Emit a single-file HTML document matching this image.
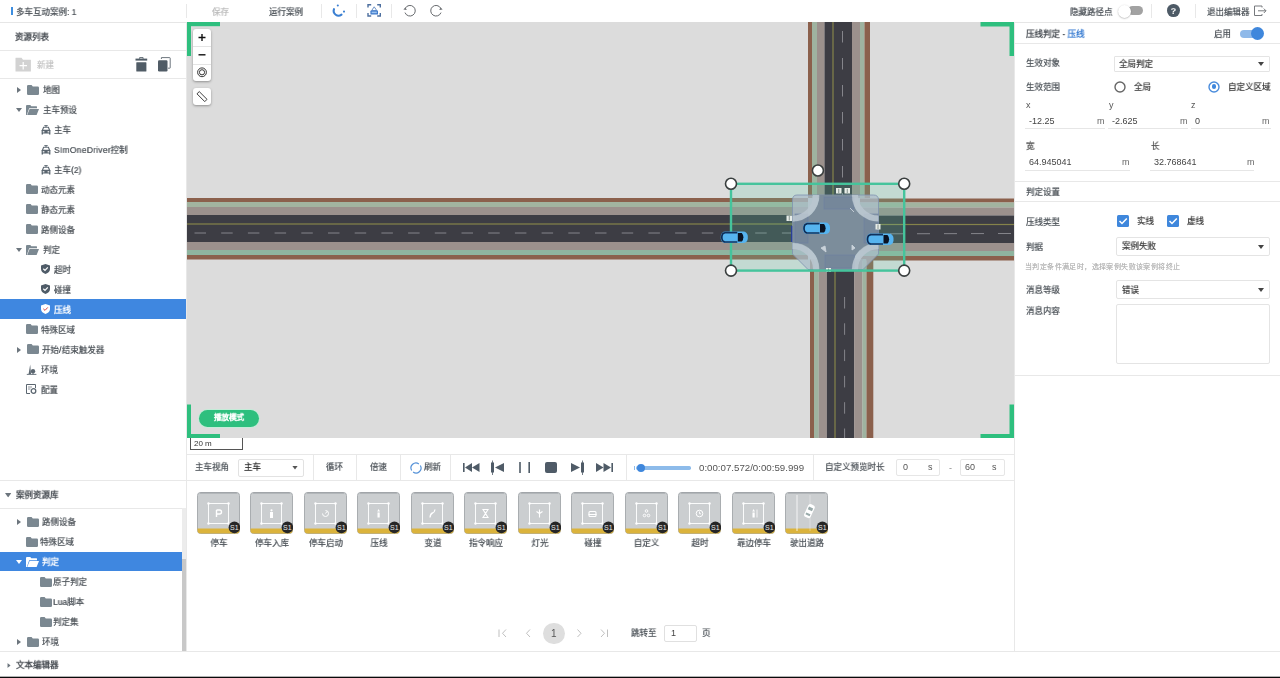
<!DOCTYPE html>
<html lang="zh-CN">
<head>
<meta charset="utf-8">
<style>
*{margin:0;padding:0;box-sizing:border-box}
html,body{width:1280px;height:678px;overflow:hidden;background:#fff}
body{font-family:"Liberation Sans",sans-serif;font-size:9px;color:#52585e;position:relative}
.a{position:absolute}
.t{position:absolute;white-space:nowrap;line-height:13px;height:13px;transform:scale(0.944);transform-origin:0 50%;text-shadow:0 0 .5px;will-change:transform}
.c{transform-origin:50% 50%}
.l{transform:none;text-shadow:none}
.hl{position:absolute;height:1px;background:#e8e8e8}
.vl{position:absolute;width:1px;background:#e8e8e8}
svg.i{position:absolute;overflow:visible}
</style>
</head>
<body>
<svg width="0" height="0" style="position:absolute">
  <defs>
    <symbol id="folder" viewBox="0 0 12 10"><path d="M0 1.2Q0 0 1.2 0H4.6L5.8 1.6H10.8Q12 1.6 12 2.8V8.8Q12 10 10.8 10H1.2Q0 10 0 8.8Z" fill="#7b8891"/></symbol>
    <symbol id="open" viewBox="0 0 13 10"><path d="M0 1Q0 0 1 0H4.3L5.3 1.3H10.5Q11 1.3 11 2V3.3H3.2L0.8 10H0Z" fill="#7b8891"/><path d="M3.6 4H13L10.6 10H1.2Z" fill="#7b8891"/></symbol>
    <symbol id="car" viewBox="0 0 10 10"><path d="M3.2 0.3H6.8M5 0.3V1.8M2.6 2.2H7.4L8.6 5.2H1.4Z" stroke="#5b6670" stroke-width="1.1" fill="none"/><path d="M0.6 5H9.4V9.6H8V8.6H2V9.6H0.6Z" fill="#5b6670"/><rect x="1.8" y="6.2" width="1.6" height="1.2" fill="#fff"/><rect x="6.6" y="6.2" width="1.6" height="1.2" fill="#fff"/></symbol>
    <symbol id="shield" viewBox="0 0 9 10"><path d="M4.5 0L9 1.4V5Q9 8.4 4.5 10Q0 8.4 0 5V1.4Z" fill="#4f5c68"/><path d="M2.3 4.8L4 6.4L6.8 3.4" stroke="#fff" stroke-width="1.2" fill="none"/></symbol>
    <symbol id="tri-r" viewBox="0 0 4 6"><path d="M0 0L4 3L0 6Z" fill="#6c757d"/></symbol>
    <symbol id="tri-d" viewBox="0 0 6 4"><path d="M0 0H6L3 4Z" fill="#6c757d"/></symbol>
  </defs>
</svg>

<!-- ============ TOP BAR ============ -->
<div class="a" style="left:0;top:0;width:1280px;height:23px;background:#fff;border-bottom:1px solid #e6e6e6"></div>
<div class="a" style="left:11px;top:7px;width:2px;height:8px;background:#3d8ee0"></div>
<div class="t" style="left:16px;top:5.5px;color:#50565c">多车互动案例: 1</div>
<div class="vl" style="left:186px;top:4px;height:14px"></div>
<div class="t" style="left:212px;top:5.5px;color:#bcbcbc">保存</div>
<div class="t" style="left:269px;top:5.5px;color:#50565c">运行案例</div>
<div class="vl" style="left:321px;top:4px;height:14px"></div>
<div class="vl" style="left:356px;top:4px;height:14px"></div>
<div class="vl" style="left:391px;top:4px;height:14px"></div>
<div class="t" style="left:1070px;top:5.5px;color:#50565c">隐藏路径点</div>
<div class="vl" style="left:1151px;top:4px;height:14px"></div>
<div class="vl" style="left:1194.5px;top:4px;height:14px"></div>
<div class="t" style="left:1207px;top:5.5px;color:#50565c">退出编辑器</div>

<!-- ============ LEFT PANEL ============ -->
<div class="vl" style="left:186px;top:22px;height:630px"></div>
<div class="t" style="left:15px;top:31px;font-weight:bold;color:#4a4f55;text-shadow:none">资源列表</div>
<div class="hl" style="left:0;top:50px;width:186px"></div>
<div class="t" style="left:37px;top:59px;color:#c4c4c4">新建</div>
<div class="hl" style="left:0;top:78px;width:186px"></div>

<!-- tree -->
<svg class="i" style="left:17px;top:87px" width="4" height="6"><use href="#tri-r"/></svg>
<svg class="i" style="left:27px;top:85px" width="12" height="10"><use href="#folder"/></svg>
<div class="t" style="left:42.5px;top:84px">地图</div>

<svg class="i" style="left:16px;top:108px" width="6" height="4"><use href="#tri-d"/></svg>
<svg class="i" style="left:26px;top:105px" width="13" height="10"><use href="#open"/></svg>
<div class="t" style="left:42.5px;top:104px">主车预设</div>

<svg class="i" style="left:40.5px;top:125px" width="10" height="10"><use href="#car"/></svg>
<div class="t" style="left:53.5px;top:124px">主车</div>
<svg class="i" style="left:40.5px;top:145px" width="10" height="10"><use href="#car"/></svg>
<div class="t" style="left:53.5px;top:144px"><span style="letter-spacing:.28px">SImOneDriver</span>控制</div>
<svg class="i" style="left:40.5px;top:165px" width="10" height="10"><use href="#car"/></svg>
<div class="t" style="left:53.5px;top:164px">主车(2)</div>

<svg class="i" style="left:26px;top:184px" width="12" height="10"><use href="#folder"/></svg>
<div class="t" style="left:41px;top:184px">动态元素</div>
<svg class="i" style="left:26px;top:204px" width="12" height="10"><use href="#folder"/></svg>
<div class="t" style="left:41px;top:204px">静态元素</div>
<svg class="i" style="left:26px;top:224px" width="12" height="10"><use href="#folder"/></svg>
<div class="t" style="left:41px;top:224px">路侧设备</div>

<svg class="i" style="left:16px;top:248px" width="6" height="4"><use href="#tri-d"/></svg>
<svg class="i" style="left:26px;top:245px" width="13" height="10"><use href="#open"/></svg>
<div class="t" style="left:42.5px;top:244px">判定</div>

<svg class="i" style="left:41px;top:264px" width="9" height="10"><use href="#shield"/></svg>
<div class="t" style="left:53.5px;top:264px">超时</div>
<svg class="i" style="left:41px;top:284px" width="9" height="10"><use href="#shield"/></svg>
<div class="t" style="left:53.5px;top:284px">碰撞</div>

<div class="a" style="left:0;top:299px;width:186px;height:20px;background:#3f87e0"></div>
<svg class="i" style="left:41px;top:304px" width="9" height="10" viewBox="0 0 9 10"><path d="M4.5 0L9 1.4V5Q9 8.4 4.5 10Q0 8.4 0 5V1.4Z" fill="#fff"/><path d="M2.3 4.8L4 6.4L6.8 3.4" stroke="#d64545" stroke-width="1" fill="none"/></svg>
<div class="t" style="left:53.5px;top:304px;color:#fff;font-weight:bold;text-shadow:none">压线</div>

<svg class="i" style="left:26px;top:324px" width="12" height="10"><use href="#folder"/></svg>
<div class="t" style="left:41px;top:324px">特殊区域</div>

<svg class="i" style="left:17px;top:347px" width="4" height="6"><use href="#tri-r"/></svg>
<svg class="i" style="left:27px;top:344px" width="12" height="10"><use href="#folder"/></svg>
<div class="t" style="left:42px;top:344px">开始/结束触发器</div>

<svg class="i" style="left:26px;top:364px" width="11" height="11" viewBox="0 0 11 11"><path d="M4.2 0.5L2.6 10H5Z" fill="#5b6670"/><circle cx="7" cy="7.2" r="2.2" fill="#5b6670"/><path d="M7 9V10.4M0.8 10.4H10.4" stroke="#5b6670" stroke-width="0.9"/></svg>
<div class="t" style="left:40.5px;top:364px">环境</div>
<svg class="i" style="left:26px;top:384px" width="11" height="10" viewBox="0 0 11 10"><path d="M9.5 4V0.5H0.5V9.5H4" stroke="#5b6670" stroke-width="1" fill="none"/><path d="M2 3H6M2 5H4.5" stroke="#5b6670" stroke-width="0.7"/><circle cx="7.5" cy="7" r="2.3" fill="none" stroke="#5b6670" stroke-width="1.3"/></svg>
<div class="t" style="left:40.5px;top:384px">配置</div>

<!-- case library -->
<div class="hl" style="left:0;top:480px;width:186px"></div>
<svg class="i" style="left:5.3px;top:493px" width="6.3" height="4.4" viewBox="0 0 6 4" preserveAspectRatio="none"><use href="#tri-d"/></svg>
<div class="t" style="left:15.5px;top:489px;font-weight:bold;color:#4a4f55;text-shadow:none">案例资源库</div>
<div class="hl" style="left:0;top:508px;width:186px"></div>

<svg class="i" style="left:17px;top:519px" width="4" height="6"><use href="#tri-r"/></svg>
<svg class="i" style="left:27px;top:517px" width="12" height="10"><use href="#folder"/></svg>
<div class="t" style="left:41.5px;top:516px">路侧设备</div>
<svg class="i" style="left:26px;top:537px" width="12" height="10"><use href="#folder"/></svg>
<div class="t" style="left:40px;top:536px">特殊区域</div>

<div class="a" style="left:0;top:552px;width:182px;height:19px;background:#3f87e0"></div>
<svg class="i" style="left:16px;top:560px" width="6" height="4" viewBox="0 0 6 4"><path d="M0 0H6L3 4Z" fill="#fff"/></svg>
<svg class="i" style="left:26px;top:557px" width="13" height="10" viewBox="0 0 13 10"><path d="M0 1Q0 0 1 0H4.3L5.3 1.3H10.5Q11 1.3 11 2V3.3H3.2L0.8 10H0Z" fill="#fff"/><path d="M3.6 4H13L10.6 10H1.2Z" fill="#fff"/></svg>
<div class="t" style="left:42px;top:556px;color:#fff;font-weight:bold;text-shadow:none">判定</div>

<svg class="i" style="left:40px;top:577px" width="12" height="10"><use href="#folder"/></svg>
<div class="t" style="left:53px;top:576px">原子判定</div>
<svg class="i" style="left:40px;top:597px" width="12" height="10"><use href="#folder"/></svg>
<div class="t" style="left:53px;top:596px">Lua脚本</div>
<svg class="i" style="left:40px;top:617px" width="12" height="10"><use href="#folder"/></svg>
<div class="t" style="left:53px;top:616px">判定集</div>

<svg class="i" style="left:17px;top:639px" width="4" height="6"><use href="#tri-r"/></svg>
<svg class="i" style="left:27px;top:637px" width="12" height="10"><use href="#folder"/></svg>
<div class="t" style="left:41.5px;top:636px">环境</div>

<div class="a" style="left:182px;top:508px;width:4px;height:143px;background:#ececec"></div>
<div class="a" style="left:182px;top:559px;width:4px;height:92px;background:#c8c8c8"></div>

<div class="hl" style="left:0;top:651px;width:1280px"></div>
<svg class="i" style="left:7px;top:663px" width="4" height="5" viewBox="0 0 4 6"><use href="#tri-r"/></svg>
<div class="t" style="left:15.5px;top:659px;font-weight:bold;color:#4a4f55;text-shadow:none">文本编辑器</div>
<div class="a" style="left:0;top:676px;width:1280px;height:1px;background:rgba(0,0,0,0.3)"></div><div class="a" style="left:0;top:677px;width:1280px;height:1px;background:#0a0a0a"></div>

<!-- ============ MAP ============ -->
<svg class="a" style="left:186px;top:22px" width="828" height="416" viewBox="186 22 828 416">
  <defs>
    <g id="carL">
      <rect x="0" y="0" width="27" height="11.5" rx="4.5" ry="4.5" fill="#56b4ef"/>
      <path d="M4 1.2Q1 1.5 1 5.75Q1 10 4 10.3" stroke="#0e2c55" stroke-width="1.7" fill="none"/>
      <path d="M3.5 1.1H16.5M3.5 10.4H16.5" stroke="#10325e" stroke-width="1.7"/>
      <path d="M17 1.5H21Q22.6 3.2 22.6 5.75Q22.6 8.3 21 10H17Z" fill="#0a1322"/>
    </g>
  </defs>
  <rect x="187" y="22" width="827" height="416" fill="#dcdcdc"/>
  <!-- horizontal road -->
  <g transform="translate(0,0)">
    <rect x="187" y="198" width="621" height="4" fill="#8b604c"/>
    <rect x="187" y="202" width="621" height="5" fill="#a2b4a0"/>
    <rect x="187" y="207" width="621" height="8" fill="#9c918d"/>
    <rect x="187" y="215" width="621" height="27" fill="#3d3d44"/>
    <rect x="187" y="223.4" width="621" height="1.2" fill="#85834a"/>
    <line x1="194.5" y1="233" x2="808" y2="233" stroke="#85858b" stroke-width="1" stroke-dasharray="11.5 15.2"/>
    <rect x="187" y="242" width="621" height="8" fill="#9c918d"/>
    <rect x="187" y="250" width="621" height="5" fill="#8fb49f"/>
    <rect x="187" y="255" width="621" height="4.5" fill="#8b604c"/>
  </g>
  <g transform="translate(0,0.5)">
    <rect x="860" y="198" width="154" height="4" fill="#8b604c"/>
    <rect x="860" y="202" width="154" height="5" fill="#a2b4a0"/>
    <rect x="860" y="207" width="154" height="8" fill="#9c918d"/>
    <rect x="860" y="215" width="154" height="27.5" fill="#3d3d44"/>
    <rect x="860" y="223.4" width="154" height="1.2" fill="#85834a"/>
    <line x1="890" y1="233.3" x2="1014" y2="233" stroke="#85858b" stroke-width="1" stroke-dasharray="13 14"/>
    <rect x="860" y="242.5" width="154" height="8" fill="#9c918d"/>
    <rect x="860" y="250.5" width="154" height="5" fill="#8fb49f"/>
    <rect x="860" y="255.5" width="154" height="4.5" fill="#8b604c"/>
  </g>
  <!-- vertical road top -->
  <g>
    <rect x="808" y="22" width="4" height="176" fill="#8b604c"/>
    <rect x="812" y="22" width="5" height="176" fill="#9fb3a0"/>
    <rect x="817" y="22" width="7.5" height="176" fill="#9c918d"/>
    <rect x="824.5" y="22" width="27.5" height="176" fill="#3d3d44"/>
    <rect x="832.4" y="22" width="1.2" height="176" fill="#85834a"/>
    <line x1="842.5" y1="31" x2="842.5" y2="198" stroke="#85858b" stroke-width="1" stroke-dasharray="11.5 15.5"/>
    <rect x="852" y="22" width="8" height="176" fill="#9c918d"/>
    <rect x="860" y="22" width="4.5" height="176" fill="#9fb3a0"/>
    <rect x="864.5" y="22" width="5.5" height="176" fill="#8b604c"/>
  </g>
  <!-- vertical road bottom -->
  <g>
    <rect x="810" y="259" width="4" height="179" fill="#8b604c"/>
    <rect x="814" y="259" width="4.7" height="179" fill="#9fb3a0"/>
    <rect x="818.7" y="259" width="8.2" height="179" fill="#9c918d"/>
    <rect x="826.9" y="259" width="27.3" height="179" fill="#3d3d44"/>
    <rect x="834.4" y="259" width="1.2" height="179" fill="#85834a"/>
    <line x1="844.6" y1="297" x2="844.6" y2="438" stroke="#85858b" stroke-width="1" stroke-dasharray="11.5 14.8"/>
    <rect x="854.2" y="259" width="8.2" height="179" fill="#9c918d"/>
    <rect x="862.4" y="259" width="4.1" height="179" fill="#9fb3a0"/>
    <rect x="866.5" y="259" width="6.8" height="179" fill="#8b604c"/>
  </g>
  <!-- selection fill -->
  <rect x="731" y="183.8" width="173.2" height="86.8" fill="#5ed0a8" fill-opacity="0.2"/>
  <!-- junction -->
  <path d="M797 195H873.5Q878.5 195 878.5 200V254L863 269.5H808L792.5 254V200Q792.5 195 797 195Z" fill="#aebccb" fill-opacity="0.72" stroke="#7f93b0" stroke-width="0.8"/>
  <path d="M819.5 195H851.5A27 27 0 0 0 878.5 222V242.5A27 27 0 0 0 851.5 269.5H819.5A27 27 0 0 0 792.5 242.5V222A27 27 0 0 0 819.5 195Z" fill="#7c8d9b"/>
  <g fill="#72849a" fill-opacity="0.6" stroke="#6b80a3" stroke-width="0.7" stroke-opacity="0.8">
  <rect x="824" y="197" width="30" height="12"/><rect x="825" y="255" width="29.5" height="13"/>
  <rect x="795" y="214" width="13" height="29"/><rect x="864" y="214" width="14" height="29"/></g>
  <path d="M816 195A23.5 23.5 0 0 1 792.5 218.5M855 195A23.5 23.5 0 0 0 878.5 218.5M855 269.5A23.5 23.5 0 0 1 878.5 246M816 269.5A23.5 23.5 0 0 0 792.5 246" stroke="#b9c5cf" stroke-width="6" fill="none" stroke-opacity="0.9"/>
  
  
  
  
  <path d="M821 248L826 252L825 246Z M852 245L855 248L852 250Z M850 208L854 212" stroke="#c9d2da" stroke-width="0.9" fill="#c9d2da"/>
  <rect x="791" y="226" width="1.3" height="16" fill="#2a3f99"/>
  <!-- stop marks -->
  <g fill="#e8ede8">
    <rect x="836" y="188" width="5.5" height="5.5"/><rect x="844.5" y="188" width="5.5" height="5.5"/>
    <rect x="786.5" y="215.5" width="5.5" height="5.5"/>
    <rect x="875.5" y="224" width="5" height="5.5"/>
    <rect x="826" y="268" width="5" height="4"/>
  </g>
  <g stroke="#5a6b66" stroke-width="0.7"><path d="M838.75 188.8V193M847.25 188.8V193M789.25 216V220.5M878 224.5V229M828.5 268.5V272"/></g>
  <!-- cars -->
  
  <!-- selection -->
  <rect x="731" y="183.8" width="173.2" height="86.8" fill="none" stroke="#45c49c" stroke-width="2.4"/>
  <g fill="#fff" stroke="#3a3f3f" stroke-width="1.6">
    <circle cx="731" cy="183.8" r="5.5"/>
    <circle cx="904.2" cy="183.8" r="5.5"/>
    <circle cx="731" cy="270.6" r="5.5"/>
    <circle cx="904.2" cy="270.6" r="5.5"/>
    <circle cx="817.9" cy="170.5" r="5.5"/>
  </g>
  <use href="#carL" x="720.8" y="231.6"/>
  <use href="#carL" x="803" y="222.6"/>
  <use href="#carL" x="866.5" y="233.6"/>
  <!-- corner brackets -->
  <g fill="#2ebf7e">
    <rect x="187" y="22" width="33" height="4.2"/><rect x="187" y="22" width="4" height="34"/>
    <rect x="980.5" y="22" width="33.5" height="4.5"/><rect x="1009.5" y="22" width="4.5" height="34"/>
    <rect x="187" y="434" width="33" height="4.3"/><rect x="187" y="404.5" width="4" height="34"/>
    <rect x="980.5" y="434" width="33.5" height="4.5"/><rect x="1009.5" y="404.5" width="4.5" height="34"/>
  </g>
</svg>


<!-- ============ BOTTOM PANEL ============ -->
<!-- scale bar -->
<div class="a" style="left:190px;top:438px;width:53px;height:12px;border:1px solid #555;border-top:none;background:#fff"></div>
<div class="t l" style="left:194px;top:438px;font-size:8px;line-height:11px;color:#333">20 m</div>
<!-- play mode pill -->
<div class="a" style="left:198.5px;top:409.5px;width:60.5px;height:17px;border-radius:9px;background:#2ebf7e;box-shadow:0 0 0 1px rgba(190,240,215,0.8)"></div>
<div class="t c" style="left:198.5px;top:412px;width:60.5px;text-align:center;color:#fff;font-weight:900;font-size:8px;line-height:12px;text-shadow:0 0 .4px #fff">播放模式</div>

<!-- control bar -->
<div class="hl" style="left:186px;top:454px;width:828px"></div>
<div class="hl" style="left:186px;top:480px;width:828px"></div>
<div class="t" style="left:195px;top:461px">主车视角</div>
<div class="a" style="left:238px;top:458.5px;width:66px;height:18px;border:1px solid #e2e2e2;border-radius:2px"></div>
<div class="t" style="left:244px;top:461px;color:#333">主车</div>
<svg class="i" style="left:292px;top:466px" width="6" height="3.5" viewBox="0 0 6 4"><path d="M0 0H6L3 4Z" fill="#555"/></svg>
<div class="vl" style="left:312.5px;top:454px;height:26px"></div>
<div class="t" style="left:325.5px;top:461px">循环</div>
<div class="vl" style="left:356px;top:454px;height:26px"></div>
<div class="t" style="left:369.5px;top:461px">倍速</div>
<div class="vl" style="left:400px;top:454px;height:26px"></div>
<svg class="i" style="left:409.5px;top:461.5px" width="12" height="12" viewBox="0 0 12 12"><path d="M10.33 3.50A5 5 0 0 1 3.13 10.10M1.67 8.50A5 5 0 0 1 8.87 1.90" stroke="#5592d8" stroke-width="1.2" fill="none"/></svg>
<div class="t" style="left:423.5px;top:461px">刷新</div>
<div class="vl" style="left:449.5px;top:454px;height:26px"></div>
<!-- transport icons -->
<svg class="i" style="left:463px;top:460px" width="150" height="16" viewBox="463 460 150 16">
  <g fill="#4f5b67">
    <rect x="463" y="463" width="1.6" height="9"/>
    <path d="M465 467.5L472 463V472Z"/><path d="M472 467.5L479.5 463V472Z"/>
    <rect x="491" y="462.5" width="3" height="10"/><rect x="492.1" y="460.5" width="0.8" height="14.5"/><path d="M495 467.5L504 463V472Z"/>
    <rect x="519.2" y="462" width="1.6" height="11"/><rect x="528.4" y="462" width="1.6" height="11"/>
    <rect x="545" y="462" width="12" height="11" rx="2"/>
    <path d="M571 463L580 467.5L571 472Z"/><rect x="581" y="462.5" width="3" height="10"/><rect x="582.1" y="460.5" width="0.8" height="14.5"/>
    <path d="M596 463L603.5 467.5L596 472Z"/><path d="M603.5 463L611 467.5L603.5 472Z"/><rect x="611.4" y="463" width="1.6" height="9"/>
  </g>
</svg>
<div class="vl" style="left:626px;top:454px;height:26px"></div>
<div class="a" style="left:636px;top:466.2px;width:54.5px;height:3.4px;border-radius:1.7px;background:#8dbbea"></div><div class="a" style="left:634px;top:465.5px;width:1px;height:4.5px;background:#8dbbea"></div>
<div class="a" style="left:637.3px;top:464px;width:8px;height:8px;border-radius:50%;background:#3f87dc"></div>
<div class="t l" style="left:699px;top:461px;font-size:9.7px;color:#555">0:00:07.572/0:00:59.999</div>
<div class="vl" style="left:812.5px;top:454px;height:26px"></div>
<div class="t" style="left:825px;top:461px">自定义预览时长</div>
<div class="a" style="left:896px;top:458.5px;width:44px;height:17.5px;border:1px solid #e6e6e6;border-radius:2px"></div>
<div class="t l" style="left:903px;top:461px;color:#555">0</div>
<div class="t l" style="left:928px;top:461px;color:#555">s</div>
<div class="t l" style="left:949px;top:462px;color:#888">-</div>
<div class="a" style="left:960px;top:458.5px;width:45px;height:17.5px;border:1px solid #e6e6e6;border-radius:2px"></div>
<div class="t l" style="left:965px;top:461px;color:#555">60</div>
<div class="t l" style="left:992px;top:461px;color:#555">s</div>

<div class="a card" style="left:197.0px;top:492px"><svg class="a" style="left:0;top:0" width="43" height="42" viewBox="0 0 43 42"><rect x="0.5" y="0.5" width="42" height="41" rx="3" fill="#cbced0" stroke="#a9adb0"/><path d="M3 1H40" stroke="#9a9ea1" stroke-width="1.2"/><path d="M0.5 36.5H42.5V38.5Q42.5 41.5 39.5 41.5H3.5Q0.5 41.5 0.5 38.5Z" fill="#dbb33c"/><g transform="translate(11.5,11.5)"><rect x="0" y="0" width="20" height="20" fill="none" stroke="#fff" stroke-width="0.9"/><g fill="#fff"><circle cx="0" cy="0" r="1.2"/><circle cx="20" cy="0" r="1.2"/><circle cx="0" cy="20" r="1.2"/><circle cx="20" cy="20" r="1.2"/></g><path d="M8 6.5V13.5M8 6.5H11Q13 6.5 13 8.5Q13 10.5 11 10.5H8" stroke="#fff" stroke-width="1.4" fill="none"/></g><circle cx="37.4" cy="35.4" r="5.8" fill="#262626"/><text x="37.4" y="38" font-size="7" font-family="Liberation Sans" fill="#e6e6e6" text-anchor="middle">S1</text></svg><div class="t c" style="left:-10px;width:63px;text-align:center;top:45px">停车</div></div>
<div class="a card" style="left:250.4px;top:492px"><svg class="a" style="left:0;top:0" width="43" height="42" viewBox="0 0 43 42"><rect x="0.5" y="0.5" width="42" height="41" rx="3" fill="#cbced0" stroke="#a9adb0"/><path d="M3 1H40" stroke="#9a9ea1" stroke-width="1.2"/><path d="M0.5 36.5H42.5V38.5Q42.5 41.5 39.5 41.5H3.5Q0.5 41.5 0.5 38.5Z" fill="#dbb33c"/><g transform="translate(11.5,11.5)"><rect x="0" y="0" width="20" height="20" fill="none" stroke="#fff" stroke-width="0.9"/><g fill="#fff"><circle cx="0" cy="0" r="1.2"/><circle cx="20" cy="0" r="1.2"/><circle cx="0" cy="20" r="1.2"/><circle cx="20" cy="20" r="1.2"/></g><rect x="8.5" y="8.5" width="3" height="6" fill="#fff"/><circle cx="10" cy="6.8" r="1.1" fill="#fff"/></g><circle cx="37.4" cy="35.4" r="5.8" fill="#262626"/><text x="37.4" y="38" font-size="7" font-family="Liberation Sans" fill="#e6e6e6" text-anchor="middle">S1</text></svg><div class="t c" style="left:-10px;width:63px;text-align:center;top:45px">停车入库</div></div>
<div class="a card" style="left:303.9px;top:492px"><svg class="a" style="left:0;top:0" width="43" height="42" viewBox="0 0 43 42"><rect x="0.5" y="0.5" width="42" height="41" rx="3" fill="#cbced0" stroke="#a9adb0"/><path d="M3 1H40" stroke="#9a9ea1" stroke-width="1.2"/><path d="M0.5 36.5H42.5V38.5Q42.5 41.5 39.5 41.5H3.5Q0.5 41.5 0.5 38.5Z" fill="#dbb33c"/><g transform="translate(11.5,11.5)"><rect x="0" y="0" width="20" height="20" fill="none" stroke="#fff" stroke-width="0.9"/><g fill="#fff"><circle cx="0" cy="0" r="1.2"/><circle cx="20" cy="0" r="1.2"/><circle cx="0" cy="20" r="1.2"/><circle cx="20" cy="20" r="1.2"/></g><path d="M7 10A3 3 0 1 0 10 7" stroke="#fff" stroke-width="1" fill="none"/><path d="M10 10L11.5 8" stroke="#fff" stroke-width="1"/></g><circle cx="37.4" cy="35.4" r="5.8" fill="#262626"/><text x="37.4" y="38" font-size="7" font-family="Liberation Sans" fill="#e6e6e6" text-anchor="middle">S1</text></svg><div class="t c" style="left:-10px;width:63px;text-align:center;top:45px">停车启动</div></div>
<div class="a card" style="left:357.4px;top:492px"><svg class="a" style="left:0;top:0" width="43" height="42" viewBox="0 0 43 42"><rect x="0.5" y="0.5" width="42" height="41" rx="3" fill="#cbced0" stroke="#a9adb0"/><path d="M3 1H40" stroke="#9a9ea1" stroke-width="1.2"/><path d="M0.5 36.5H42.5V38.5Q42.5 41.5 39.5 41.5H3.5Q0.5 41.5 0.5 38.5Z" fill="#dbb33c"/><g transform="translate(11.5,11.5)"><rect x="0" y="0" width="20" height="20" fill="none" stroke="#fff" stroke-width="0.9"/><g fill="#fff"><circle cx="0" cy="0" r="1.2"/><circle cx="20" cy="0" r="1.2"/><circle cx="0" cy="20" r="1.2"/><circle cx="20" cy="20" r="1.2"/></g><rect x="9" y="9" width="2.2" height="5" fill="#fff"/><path d="M10.1 5.5L11.5 8H8.7Z" fill="#fff"/></g><circle cx="37.4" cy="35.4" r="5.8" fill="#262626"/><text x="37.4" y="38" font-size="7" font-family="Liberation Sans" fill="#e6e6e6" text-anchor="middle">S1</text></svg><div class="t c" style="left:-10px;width:63px;text-align:center;top:45px">压线</div></div>
<div class="a card" style="left:410.8px;top:492px"><svg class="a" style="left:0;top:0" width="43" height="42" viewBox="0 0 43 42"><rect x="0.5" y="0.5" width="42" height="41" rx="3" fill="#cbced0" stroke="#a9adb0"/><path d="M3 1H40" stroke="#9a9ea1" stroke-width="1.2"/><path d="M0.5 36.5H42.5V38.5Q42.5 41.5 39.5 41.5H3.5Q0.5 41.5 0.5 38.5Z" fill="#dbb33c"/><g transform="translate(11.5,11.5)"><rect x="0" y="0" width="20" height="20" fill="none" stroke="#fff" stroke-width="0.9"/><g fill="#fff"><circle cx="0" cy="0" r="1.2"/><circle cx="20" cy="0" r="1.2"/><circle cx="0" cy="20" r="1.2"/><circle cx="20" cy="20" r="1.2"/></g><path d="M7.5 14Q8 10 10 9.5Q12 9 12.5 6" stroke="#fff" stroke-width="1.3" fill="none"/></g><circle cx="37.4" cy="35.4" r="5.8" fill="#262626"/><text x="37.4" y="38" font-size="7" font-family="Liberation Sans" fill="#e6e6e6" text-anchor="middle">S1</text></svg><div class="t c" style="left:-10px;width:63px;text-align:center;top:45px">变道</div></div>
<div class="a card" style="left:464.2px;top:492px"><svg class="a" style="left:0;top:0" width="43" height="42" viewBox="0 0 43 42"><rect x="0.5" y="0.5" width="42" height="41" rx="3" fill="#cbced0" stroke="#a9adb0"/><path d="M3 1H40" stroke="#9a9ea1" stroke-width="1.2"/><path d="M0.5 36.5H42.5V38.5Q42.5 41.5 39.5 41.5H3.5Q0.5 41.5 0.5 38.5Z" fill="#dbb33c"/><g transform="translate(11.5,11.5)"><rect x="0" y="0" width="20" height="20" fill="none" stroke="#fff" stroke-width="0.9"/><g fill="#fff"><circle cx="0" cy="0" r="1.2"/><circle cx="20" cy="0" r="1.2"/><circle cx="0" cy="20" r="1.2"/><circle cx="20" cy="20" r="1.2"/></g><path d="M7.5 6H12.5L10 10L12.5 14H7.5L10 10Z" stroke="#fff" stroke-width="1.1" fill="none"/></g><circle cx="37.4" cy="35.4" r="5.8" fill="#262626"/><text x="37.4" y="38" font-size="7" font-family="Liberation Sans" fill="#e6e6e6" text-anchor="middle">S1</text></svg><div class="t c" style="left:-10px;width:63px;text-align:center;top:45px">指令响应</div></div>
<div class="a card" style="left:517.7px;top:492px"><svg class="a" style="left:0;top:0" width="43" height="42" viewBox="0 0 43 42"><rect x="0.5" y="0.5" width="42" height="41" rx="3" fill="#cbced0" stroke="#a9adb0"/><path d="M3 1H40" stroke="#9a9ea1" stroke-width="1.2"/><path d="M0.5 36.5H42.5V38.5Q42.5 41.5 39.5 41.5H3.5Q0.5 41.5 0.5 38.5Z" fill="#dbb33c"/><g transform="translate(11.5,11.5)"><rect x="0" y="0" width="20" height="20" fill="none" stroke="#fff" stroke-width="0.9"/><g fill="#fff"><circle cx="0" cy="0" r="1.2"/><circle cx="20" cy="0" r="1.2"/><circle cx="0" cy="20" r="1.2"/><circle cx="20" cy="20" r="1.2"/></g><path d="M10 6V14M7 8L10 10L13 8" stroke="#fff" stroke-width="1.1" fill="none"/></g><circle cx="37.4" cy="35.4" r="5.8" fill="#262626"/><text x="37.4" y="38" font-size="7" font-family="Liberation Sans" fill="#e6e6e6" text-anchor="middle">S1</text></svg><div class="t c" style="left:-10px;width:63px;text-align:center;top:45px">灯光</div></div>
<div class="a card" style="left:571.2px;top:492px"><svg class="a" style="left:0;top:0" width="43" height="42" viewBox="0 0 43 42"><rect x="0.5" y="0.5" width="42" height="41" rx="3" fill="#cbced0" stroke="#a9adb0"/><path d="M3 1H40" stroke="#9a9ea1" stroke-width="1.2"/><path d="M0.5 36.5H42.5V38.5Q42.5 41.5 39.5 41.5H3.5Q0.5 41.5 0.5 38.5Z" fill="#dbb33c"/><g transform="translate(11.5,11.5)"><rect x="0" y="0" width="20" height="20" fill="none" stroke="#fff" stroke-width="0.9"/><g fill="#fff"><circle cx="0" cy="0" r="1.2"/><circle cx="20" cy="0" r="1.2"/><circle cx="0" cy="20" r="1.2"/><circle cx="20" cy="20" r="1.2"/></g><rect x="6.5" y="8" width="7" height="5" rx="1" stroke="#fff" stroke-width="1.1" fill="none"/><path d="M6 11H14" stroke="#fff" stroke-width="1"/></g><circle cx="37.4" cy="35.4" r="5.8" fill="#262626"/><text x="37.4" y="38" font-size="7" font-family="Liberation Sans" fill="#e6e6e6" text-anchor="middle">S1</text></svg><div class="t c" style="left:-10px;width:63px;text-align:center;top:45px">碰撞</div></div>
<div class="a card" style="left:624.6px;top:492px"><svg class="a" style="left:0;top:0" width="43" height="42" viewBox="0 0 43 42"><rect x="0.5" y="0.5" width="42" height="41" rx="3" fill="#cbced0" stroke="#a9adb0"/><path d="M3 1H40" stroke="#9a9ea1" stroke-width="1.2"/><path d="M0.5 36.5H42.5V38.5Q42.5 41.5 39.5 41.5H3.5Q0.5 41.5 0.5 38.5Z" fill="#dbb33c"/><g transform="translate(11.5,11.5)"><rect x="0" y="0" width="20" height="20" fill="none" stroke="#fff" stroke-width="0.9"/><g fill="#fff"><circle cx="0" cy="0" r="1.2"/><circle cx="20" cy="0" r="1.2"/><circle cx="0" cy="20" r="1.2"/><circle cx="20" cy="20" r="1.2"/></g><circle cx="10" cy="7.5" r="1.3" stroke="#fff" stroke-width="0.9" fill="none"/><circle cx="8" cy="12" r="1.3" stroke="#fff" stroke-width="0.9" fill="none"/><circle cx="12" cy="12" r="1.3" stroke="#fff" stroke-width="0.9" fill="none"/></g><circle cx="37.4" cy="35.4" r="5.8" fill="#262626"/><text x="37.4" y="38" font-size="7" font-family="Liberation Sans" fill="#e6e6e6" text-anchor="middle">S1</text></svg><div class="t c" style="left:-10px;width:63px;text-align:center;top:45px">自定义</div></div>
<div class="a card" style="left:678.0px;top:492px"><svg class="a" style="left:0;top:0" width="43" height="42" viewBox="0 0 43 42"><rect x="0.5" y="0.5" width="42" height="41" rx="3" fill="#cbced0" stroke="#a9adb0"/><path d="M3 1H40" stroke="#9a9ea1" stroke-width="1.2"/><path d="M0.5 36.5H42.5V38.5Q42.5 41.5 39.5 41.5H3.5Q0.5 41.5 0.5 38.5Z" fill="#dbb33c"/><g transform="translate(11.5,11.5)"><rect x="0" y="0" width="20" height="20" fill="none" stroke="#fff" stroke-width="0.9"/><g fill="#fff"><circle cx="0" cy="0" r="1.2"/><circle cx="20" cy="0" r="1.2"/><circle cx="0" cy="20" r="1.2"/><circle cx="20" cy="20" r="1.2"/></g><circle cx="10" cy="10" r="3.3" stroke="#fff" stroke-width="1" fill="none"/><path d="M10 8V10.3H11.5" stroke="#fff" stroke-width="0.9" fill="none"/></g><circle cx="37.4" cy="35.4" r="5.8" fill="#262626"/><text x="37.4" y="38" font-size="7" font-family="Liberation Sans" fill="#e6e6e6" text-anchor="middle">S1</text></svg><div class="t c" style="left:-10px;width:63px;text-align:center;top:45px">超时</div></div>
<div class="a card" style="left:731.5px;top:492px"><svg class="a" style="left:0;top:0" width="43" height="42" viewBox="0 0 43 42"><rect x="0.5" y="0.5" width="42" height="41" rx="3" fill="#cbced0" stroke="#a9adb0"/><path d="M3 1H40" stroke="#9a9ea1" stroke-width="1.2"/><path d="M0.5 36.5H42.5V38.5Q42.5 41.5 39.5 41.5H3.5Q0.5 41.5 0.5 38.5Z" fill="#dbb33c"/><g transform="translate(11.5,11.5)"><rect x="0" y="0" width="20" height="20" fill="none" stroke="#fff" stroke-width="0.9"/><g fill="#fff"><circle cx="0" cy="0" r="1.2"/><circle cx="20" cy="0" r="1.2"/><circle cx="0" cy="20" r="1.2"/><circle cx="20" cy="20" r="1.2"/></g><rect x="9" y="9" width="2.2" height="5" fill="#fff"/><path d="M10.1 5.5L11.5 8H8.7Z" fill="#fff"/><path d="M13.5 6V14" stroke="#fff" stroke-width="0.8"/></g><circle cx="37.4" cy="35.4" r="5.8" fill="#262626"/><text x="37.4" y="38" font-size="7" font-family="Liberation Sans" fill="#e6e6e6" text-anchor="middle">S1</text></svg><div class="t c" style="left:-10px;width:63px;text-align:center;top:45px">靠边停车</div></div>
<div class="a card" style="left:785.0px;top:492px"><svg class="a" style="left:0;top:0" width="43" height="42" viewBox="0 0 43 42"><rect x="0.5" y="0.5" width="42" height="41" rx="3" fill="#cbced0" stroke="#a9adb0"/><path d="M3 1H40" stroke="#9a9ea1" stroke-width="1.2"/><path d="M0.5 36.5H42.5V38.5Q42.5 41.5 39.5 41.5H3.5Q0.5 41.5 0.5 38.5Z" fill="#dbb33c"/><path d="M12 3V39" stroke="#fff" stroke-width="0.8"/><path d="M25 3V39" stroke="#fff" stroke-width="0.5" stroke-opacity="0.7"/><g transform="rotate(25 24 20)"><rect x="20.5" y="12" width="7" height="14" rx="2.5" fill="#fff"/><rect x="21.7" y="15" width="4.6" height="3" fill="#9aa"/><rect x="21.7" y="21.5" width="4.6" height="2" fill="#9aa"/></g><circle cx="37.4" cy="35.4" r="5.8" fill="#262626"/><text x="37.4" y="38" font-size="7" font-family="Liberation Sans" fill="#e6e6e6" text-anchor="middle">S1</text></svg><div class="t c" style="left:-10px;width:63px;text-align:center;top:45px">驶出道路</div></div>

<!-- pagination -->
<svg class="i" style="left:498px;top:628px" width="112" height="10" viewBox="498 628 112 10">
  <g stroke="#b8b8b8" stroke-width="0.9" fill="none">
    <path d="M499 629.5V637M506 629.5L502.5 633.3L506 637"/>
    <path d="M530 629.5L526.5 633.3L530 637"/>
    <path d="M577.5 629.5L581 633.3L577.5 637"/>
    <path d="M601 629.5L604.5 633.3L601 637M607.5 629.5V637"/>
  </g>
</svg>
<div class="a" style="left:543px;top:622.5px;width:21.5px;height:21.5px;border-radius:50%;background:#dedede"></div>
<div class="t c l" style="left:543px;top:626.5px;width:21.5px;text-align:center;color:#555;font-size:10px">1</div>
<div class="t" style="left:630.5px;top:627px">跳转至</div>
<div class="a" style="left:663.5px;top:624.5px;width:33px;height:17px;border:1px solid #e0e0e0;border-radius:2px"></div>
<div class="t l" style="left:671px;top:627px;color:#444">1</div>
<div class="t" style="left:701.5px;top:627px">页</div>


<!-- ============ RIGHT PANEL ============ -->
<div class="t" style="left:1025.5px;top:27.5px;font-weight:bold;color:#4a4f55;text-shadow:none">压线判定 - <span style="color:#3d7fd3">压线</span></div>
<div class="t" style="left:1214px;top:27.5px;color:#4a4f55">启用</div>
<div class="a" style="left:1240px;top:29.5px;width:22px;height:8px;border-radius:4px;background:#8fb9e9"></div>
<div class="a" style="left:1250.5px;top:27px;width:13px;height:13px;border-radius:50%;background:#3f87dc"></div>
<div class="hl" style="left:1015px;top:43px;width:265px"></div>

<div class="t" style="left:1025.5px;top:57px">生效对象</div>
<div class="a" style="left:1114px;top:56px;width:155.5px;height:16px;border:1px solid #e4e4e4;border-radius:1px"></div>
<div class="t" style="left:1118.5px;top:57.5px;color:#444">全局判定</div>
<svg class="i" style="left:1258px;top:62px" width="6" height="4" viewBox="0 0 6 4"><path d="M0 0H6L3 4Z" fill="#444"/></svg>

<div class="t" style="left:1025.5px;top:80.5px">生效范围</div>
<svg class="i" style="left:1114px;top:80.5px" width="12" height="12" viewBox="0 0 12 12"><circle cx="6" cy="6" r="5" fill="none" stroke="#666" stroke-width="1.4"/></svg>
<div class="t" style="left:1133.5px;top:80.5px;color:#444">全局</div>
<svg class="i" style="left:1208px;top:80.5px" width="12" height="12" viewBox="0 0 12 12"><circle cx="6" cy="6" r="5" fill="none" stroke="#4a8cdc" stroke-width="1.4"/></svg>
<div class="a" style="left:1211.7px;top:84.2px;width:4.6px;height:4.6px;border-radius:50%;background:#3f87dc"></div>
<div class="t" style="left:1227.5px;top:80.5px;color:#444">自定义区域</div>

<div class="t l" style="left:1025.5px;top:98.5px;color:#555">x</div>
<div class="t l" style="left:1108.5px;top:98.5px;color:#555">y</div>
<div class="t l" style="left:1190.5px;top:98.5px;color:#555">z</div>
<div class="a" style="left:1024.5px;top:127.5px;width:80px;height:1px;background:#e6e6e6"></div>
<div class="a" style="left:1108px;top:127.5px;width:79.5px;height:1px;background:#e6e6e6"></div>
<div class="a" style="left:1190.5px;top:127.5px;width:80px;height:1px;background:#e6e6e6"></div>
<div class="t l" style="left:1029px;top:115px;color:#444">-12.25</div>
<div class="t l" style="left:1097px;top:115px;color:#666">m</div>
<div class="t l" style="left:1112px;top:115px;color:#444">-2.625</div>
<div class="t l" style="left:1180px;top:115px;color:#666">m</div>
<div class="t l" style="left:1195px;top:115px;color:#444">0</div>
<div class="t l" style="left:1262px;top:115px;color:#666">m</div>

<div class="t" style="left:1025.5px;top:140px;color:#555">宽</div>
<div class="t" style="left:1151px;top:140px;color:#555">长</div>
<div class="a" style="left:1024.5px;top:169.5px;width:105px;height:1px;background:#e6e6e6"></div>
<div class="a" style="left:1150px;top:169.5px;width:104px;height:1px;background:#e6e6e6"></div>
<div class="t l" style="left:1029px;top:156px;color:#444">64.945041</div>
<div class="t l" style="left:1122px;top:156px;color:#666">m</div>
<div class="t l" style="left:1154px;top:156px;color:#444">32.768641</div>
<div class="t l" style="left:1247px;top:156px;color:#666">m</div>

<div class="hl" style="left:1015px;top:180.5px;width:265px"></div>
<div class="t" style="left:1025.5px;top:185.5px">判定设置</div>
<div class="hl" style="left:1015px;top:201px;width:265px"></div>

<div class="t" style="left:1025.5px;top:215.5px">压线类型</div>
<svg class="i" style="left:1117px;top:214.5px" width="12" height="12" viewBox="0 0 12 12"><rect width="12" height="12" rx="1.5" fill="#3f87dc"/><path d="M2.5 6L5 8.5L9.8 3.5" stroke="#fff" stroke-width="1.5" fill="none"/></svg>
<div class="t" style="left:1136.5px;top:215px;color:#444">实线</div>
<svg class="i" style="left:1166.5px;top:214.5px" width="12" height="12" viewBox="0 0 12 12"><rect width="12" height="12" rx="1.5" fill="#3f87dc"/><path d="M2.5 6L5 8.5L9.8 3.5" stroke="#fff" stroke-width="1.5" fill="none"/></svg>
<div class="t" style="left:1186.5px;top:215px;color:#444">虚线</div>

<div class="t" style="left:1025.5px;top:240.5px">判据</div>
<div class="a" style="left:1115.5px;top:236.5px;width:154px;height:19px;border:1px solid #e4e4e4;border-radius:2px"></div>
<div class="t" style="left:1121.5px;top:240px;color:#444">案例失败</div>
<svg class="i" style="left:1258px;top:244.5px" width="6" height="4" viewBox="0 0 6 4"><path d="M0 0H6L3 4Z" fill="#444"/></svg>
<div class="t" style="left:1024.5px;top:261.5px;font-size:7px;line-height:9px;color:#b8b8b8;transform:none;letter-spacing:0.4px">当判定条件满足时，选择案例失败该案例将终止</div>

<div class="t" style="left:1025.5px;top:283.5px">消息等级</div>
<div class="a" style="left:1115.5px;top:279.5px;width:154px;height:19px;border:1px solid #e4e4e4;border-radius:2px"></div>
<div class="t" style="left:1121.5px;top:283.5px;color:#444">错误</div>
<svg class="i" style="left:1258px;top:287.5px" width="6" height="4" viewBox="0 0 6 4"><path d="M0 0H6L3 4Z" fill="#444"/></svg>

<div class="t" style="left:1025.5px;top:305px">消息内容</div>
<div class="a" style="left:1115.5px;top:304px;width:154.5px;height:60px;border:1px solid #e4e4e4;border-radius:2px"></div>
<div class="hl" style="left:1015px;top:375px;width:265px"></div>

<div class="vl" style="left:1014px;top:22px;height:630px"></div>

<!-- toolbar icons -->
<svg class="i" style="left:332px;top:3px" width="14" height="15" viewBox="332 3 14 15"><path d="M334 9.2A4.8 4.8 0 0 0 341.5 14.6" stroke="#3a7fd2" stroke-width="2.1" fill="none" stroke-linecap="round"/><circle cx="337.8" cy="5.5" r="1.05" fill="#3a7fd2"/><circle cx="344" cy="11.6" r="1.05" fill="#3a7fd2"/></svg>
<svg class="i" style="left:366px;top:3px" width="16" height="15" viewBox="366 3 16 15"><g stroke="#4d6f9f" stroke-width="1.4" fill="none"><path d="M368 7.6V4.7H371.2M377.2 4.7H380.3V7.6M380.3 13V16H377.2M371.2 16H368V13"/></g><path d="M374.2 6.8L371.6 10.6H376.8Z" stroke="#5b86c0" stroke-width="0.9" fill="none"/><rect x="370.4" y="10.6" width="7.6" height="4" rx="0.6" fill="#3f7acb"/><rect x="371.6" y="11.6" width="5.2" height="1.6" fill="#9cc3ef"/></svg>
<svg class="i" style="left:402px;top:4px" width="16" height="14" viewBox="402 4 16 14"><path d="M405 12.6A5.3 5.3 0 1 0 405.3 8.2" stroke="#66696d" stroke-width="1" fill="none"/><path d="M403.4 9.6L405.4 7.6L406.8 10.1Z" fill="#66696d"/></svg>
<svg class="i" style="left:428px;top:4px" width="16" height="14" viewBox="428 4 16 14"><path d="M441 12.6A5.3 5.3 0 1 1 440.7 8.2" stroke="#66696d" stroke-width="1" fill="none"/><path d="M442.6 9.6L440.6 7.6L439.2 10.1Z" fill="#66696d"/></svg>
<!-- toggle hide path -->
<div class="a" style="left:1128px;top:6px;width:15.3px;height:9.2px;border-radius:4.6px;background:#a2a2a2"></div>
<div class="a" style="left:1118.3px;top:4.7px;width:13.2px;height:13.2px;border-radius:50%;background:#fff;box-shadow:0 0.5px 1.5px rgba(0,0,0,0.35)"></div>
<!-- help -->
<div class="a" style="left:1166.9px;top:4.2px;width:12.8px;height:12.8px;border-radius:50%;background:#4d5a66"></div>
<div class="t c" style="left:1166.9px;top:4.6px;width:12.8px;text-align:center;color:#fff;font-weight:bold;font-size:9.5px;line-height:12px;text-shadow:none">?</div>
<!-- exit -->
<svg class="i" style="left:1253px;top:5px" width="14" height="12" viewBox="1253 5 14 12"><g stroke="#76797d" stroke-width="1" fill="none"><path d="M1262 7.5V6H1254.5V15.5H1262V14"/><path d="M1258 10.8H1266M1263.8 8.6L1266 10.8L1263.8 13"/></g></svg>

<!-- left toolbar icons -->
<svg class="i" style="left:15px;top:57px" width="17" height="15" viewBox="15 57 17 15"><path d="M15.5 58Q15.5 57.7 15.8 57.7H21.5L23 59.7H30.6Q30.9 59.7 30.9 60V71.2Q30.9 71.5 30.6 71.5H15.8Q15.5 71.5 15.5 71.2Z" fill="#d2d2d2"/><path d="M23.2 62V69.5M19.5 65.7H27" stroke="#fff" stroke-width="1.2"/></svg>
<svg class="i" style="left:135px;top:56px" width="13" height="16" viewBox="135 56 13 16"><rect x="135.5" y="58.6" width="11.7" height="2" fill="#505c66"/><path d="M139.6 58.8V57.6H143.1V58.8" stroke="#505c66" stroke-width="0.9" fill="none"/><rect x="136.3" y="62.2" width="10.1" height="9.3" rx="0.6" fill="#505c66"/></svg>
<svg class="i" style="left:157px;top:56px" width="15" height="16" viewBox="157 56 15 16"><path d="M161.4 59V57.6H169.6Q170.2 57.6 170.2 58.2V67.8Q170.2 68.2 169.8 68.2H168" stroke="#5c666f" stroke-width="0.9" fill="none"/><path d="M159.2 60.2H166.3Q167.5 60.2 167.5 61.4V70.3Q167.5 71.5 166.3 71.5H159.2Q158 71.5 158 70.3V61.4Q158 60.2 159.2 60.2Z" fill="#505c66"/></svg>

<!-- map zoom controls -->
<div class="a" style="left:193px;top:29px;width:18px;height:51.5px;background:#fff;border-radius:3px;box-shadow:0 1px 2.5px rgba(0,0,0,0.35)"></div>
<div class="a" style="left:193px;top:46.3px;width:18px;height:1px;background:#e4e4e4"></div>
<div class="a" style="left:193px;top:63.5px;width:18px;height:1px;background:#e4e4e4"></div>
<svg class="i" style="left:193px;top:29px" width="18" height="52" viewBox="0 0 18 52"><path d="M9 5V12M5.5 8.5H12.5" stroke="#111" stroke-width="1.4"/><path d="M5.5 25.8H12.5" stroke="#111" stroke-width="1.4"/><circle cx="9" cy="43.3" r="4.4" fill="none" stroke="#222" stroke-width="0.9"/><circle cx="9" cy="43.3" r="2.6" fill="none" stroke="#222" stroke-width="0.9"/></svg>
<div class="a" style="left:193px;top:88px;width:18px;height:17px;background:#fff;border-radius:3px;box-shadow:0 1px 2.5px rgba(0,0,0,0.35)"></div>
<svg class="i" style="left:193px;top:88px" width="18" height="17" viewBox="0 0 18 17"><rect x="3.5" y="7" width="11" height="3.2" transform="rotate(45 9 8.6)" fill="none" stroke="#333" stroke-width="0.9"/></svg>

</body>
</html>
